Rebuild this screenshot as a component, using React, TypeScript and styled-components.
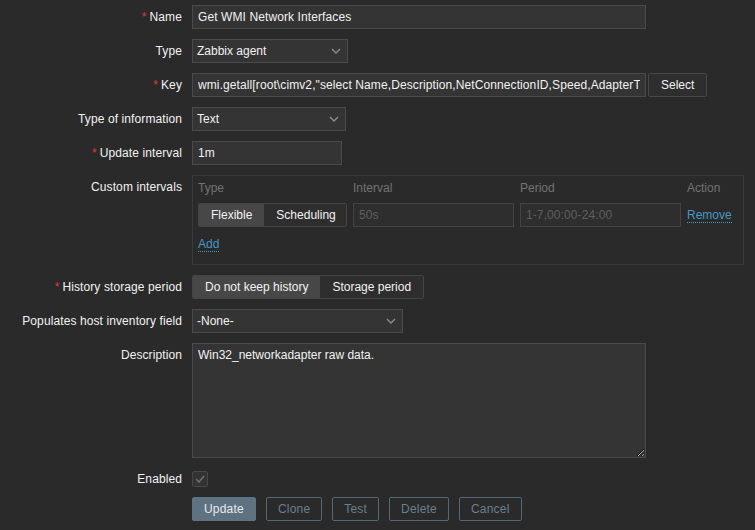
import styled, { createGlobalStyle } from "styled-components";

const GlobalStyle = createGlobalStyle`
  html, body {
    margin: 0;
    background-color: #2a2a2a;
  }
  body {
    font-family: "Liberation Sans", Arial, sans-serif;
    font-size: 12px;
    color: #f2f2f2;
  }
`;

const Form = styled.form`
  width: 755px;
  box-sizing: border-box;
  padding-top: 5px;
  display: grid;
  grid-template-columns: 182px 1fr;
  column-gap: 10px;
  row-gap: 10px;
`;

const Label = styled.label<{ $short?: boolean }>`
  text-align: right;
  line-height: ${(p) => (p.$short ? "22px" : "24px")};
  ${(p) => (p.$short ? "height: 19px;" : "")}
  white-space: nowrap;
  letter-spacing: 0.1px;
`;

const Asterisk = styled.span`
  color: #e33734;
  margin-right: 3px;
`;

const Field = styled.div<{ $height?: number }>`
  display: flex;
  align-items: flex-start;
  gap: 2px;
  ${(p) => (p.$height ? `height: ${p.$height}px;` : "")}
`;

const TextInput = styled.input<{ $w: number }>`
  width: ${(p) => p.$w}px;
  height: 24px;
  box-sizing: border-box;
  padding: 0 5px;
  background-color: #343434;
  border: 1px solid #4a4a4a;
  color: #f2f2f2;
  font: inherit;
  letter-spacing: 0.1px;
  outline: none;
`;

const DisabledInput = styled(TextInput)`
  background-color: #2e2e2e;
  border-color: #434343;
  color: #5f5f5f;
`;

const SelectWrap = styled.div<{ $w: number }>`
  position: relative;
  width: ${(p) => p.$w}px;
  height: 24px;
  svg {
    position: absolute;
    right: 7px;
    top: 9px;
    pointer-events: none;
  }
`;

const NativeSelect = styled.select`
  appearance: none;
  width: 100%;
  height: 24px;
  box-sizing: border-box;
  padding: 0 22px 0 4px;
  background-color: #343434;
  border: 1px solid #4a4a4a;
  border-radius: 0;
  color: #f2f2f2;
  font: inherit;
  outline: none;
`;

const GhostButton = styled.button`
  height: 24px;
  box-sizing: border-box;
  padding: 0 12px;
  background-color: #2e2e2e;
  border: 1px solid #474747;
  border-radius: 2px;
  color: #f2f2f2;
  font: inherit;
`;

const RadioGroup = styled.div`
  display: inline-flex;
  height: 24px;
  box-sizing: border-box;
  border: 1px solid #454545;
  border-radius: 2px;
  overflow: hidden;
`;

const RadioItem = styled.span<{ $active?: boolean }>`
  padding: 0 12px;
  line-height: 22px;
  white-space: nowrap;
  background-color: ${(p) => (p.$active ? "#474747" : "#2e2e2e")};
  color: #f2f2f2;
`;

const IntervalBox = styled.div`
  width: 552px;
  box-sizing: border-box;
  border: 1px solid #3a3a3a;
  padding: 5px 5px 10px;
  display: grid;
  grid-template-columns: 149px 161px 161px auto;
  grid-template-rows: 15px 24px 20px;
  column-gap: 6px;
  row-gap: 7px;
  align-items: center;
`;

const HeadCell = styled.div`
  color: #737373;
  line-height: 15px;
`;

const Link = styled.a`
  color: #4796c4;
  text-decoration: none;
  border-bottom: 1px dotted #4796c4;
  line-height: 14px;
  justify-self: start;
  cursor: pointer;
`;

const AddRow = styled.div`
  grid-column: 1 / -1;
  height: 20px;
  display: flex;
  align-items: center;
`;

const TextArea = styled.textarea`
  width: 454px;
  height: 115px;
  box-sizing: border-box;
  padding: 4px 5px;
  background-color: #343434;
  border: 1px solid #4a4a4a;
  color: #f2f2f2;
  font: inherit;
  line-height: 14px;
  outline: none;
  resize: both;
`;

const Check = styled.span`
  margin-top: 3px;
  width: 16px;
  height: 16px;
  box-sizing: border-box;
  border: 1px solid #474747;
  background-color: #333333;
  border-radius: 2px;
  display: flex;
  align-items: center;
  justify-content: center;
`;

const ButtonRow = styled.div`
  grid-column: 2;
  display: flex;
  gap: 10px;
`;

const ActionButton = styled.button<{ $primary?: boolean }>`
  height: 24px;
  box-sizing: border-box;
  padding: 0 11px;
  border-radius: 2px;
  font: inherit;
  letter-spacing: 0.2px;
  border: 1px solid ${(p) => (p.$primary ? "#5e7282" : "#52697a")};
  background-color: ${(p) => (p.$primary ? "#5e7282" : "transparent")};
  color: ${(p) => (p.$primary ? "#e6eaec" : "#66808f")};
`;

const Chevron = () => (
  <svg width="10" height="6" viewBox="0 0 10 6">
    <path d="M1 1 L5 5 L9 1" fill="none" stroke="#8c8c8c" strokeWidth="1.4" />
  </svg>
);

function Select({ w, value }: { w: number; value: string }) {
  return (
    <SelectWrap $w={w}>
      <NativeSelect defaultValue={value}>
        <option>{value}</option>
      </NativeSelect>
      <Chevron />
    </SelectWrap>
  );
}

function Req({ children }: { children: string }) {
  return (
    <Label>
      <Asterisk>*</Asterisk>
      {children}
    </Label>
  );
}

const KEY =
  'wmi.getall[root\\cimv2,"select Name,Description,NetConnectionID,Speed,AdapterTypeId,MACAddress from win32_networkadapter"]';

export default function App() {
  return (
    <>
      <GlobalStyle />
      <Form onSubmit={(e) => e.preventDefault()}>
        <Req>Name</Req>
        <Field>
          <TextInput $w={454} defaultValue="Get WMI Network Interfaces" />
        </Field>

        <Label>Type</Label>
        <Field>
          <Select w={156} value="Zabbix agent" />
        </Field>

        <Req>Key</Req>
        <Field>
          <TextInput $w={454} defaultValue={KEY} />
          <GhostButton type="button">Select</GhostButton>
        </Field>

        <Label>Type of information</Label>
        <Field>
          <Select w={154} value="Text" />
        </Field>

        <Req>Update interval</Req>
        <Field>
          <TextInput $w={150} defaultValue="1m" />
        </Field>

        <Label>Custom intervals</Label>
        <Field>
          <IntervalBox>
            <HeadCell>Type</HeadCell>
            <HeadCell>Interval</HeadCell>
            <HeadCell>Period</HeadCell>
            <HeadCell>Action</HeadCell>

            <RadioGroup>
              <RadioItem $active>Flexible</RadioItem>
              <RadioItem>Scheduling</RadioItem>
            </RadioGroup>
            <DisabledInput $w={161} defaultValue="50s" />
            <DisabledInput $w={161} defaultValue="1-7,00:00-24:00" />
            <Link>Remove</Link>

            <AddRow>
              <Link>Add</Link>
            </AddRow>
          </IntervalBox>
        </Field>

        <Req>History storage period</Req>
        <Field>
          <RadioGroup>
            <RadioItem $active>Do not keep history</RadioItem>
            <RadioItem>Storage period</RadioItem>
          </RadioGroup>
        </Field>

        <Label>Populates host inventory field</Label>
        <Field>
          <Select w={211} value="-None-" />
        </Field>

        <Label>Description</Label>
        <Field>
          <TextArea defaultValue="Win32_networkadapter raw data." />
        </Field>

        <Label $short>Enabled</Label>
        <Field $height={19}>
          <Check>
            <svg width="10" height="8" viewBox="0 0 10 8">
              <path d="M1 4 L4 7 L9 1" fill="none" stroke="#6e6e6e" strokeWidth="1.6" />
            </svg>
          </Check>
        </Field>

        <ButtonRow>
          <ActionButton $primary type="button">Update</ActionButton>
          <ActionButton type="button">Clone</ActionButton>
          <ActionButton type="button">Test</ActionButton>
          <ActionButton type="button">Delete</ActionButton>
          <ActionButton type="button">Cancel</ActionButton>
        </ButtonRow>
      </Form>
    </>
  );
}
